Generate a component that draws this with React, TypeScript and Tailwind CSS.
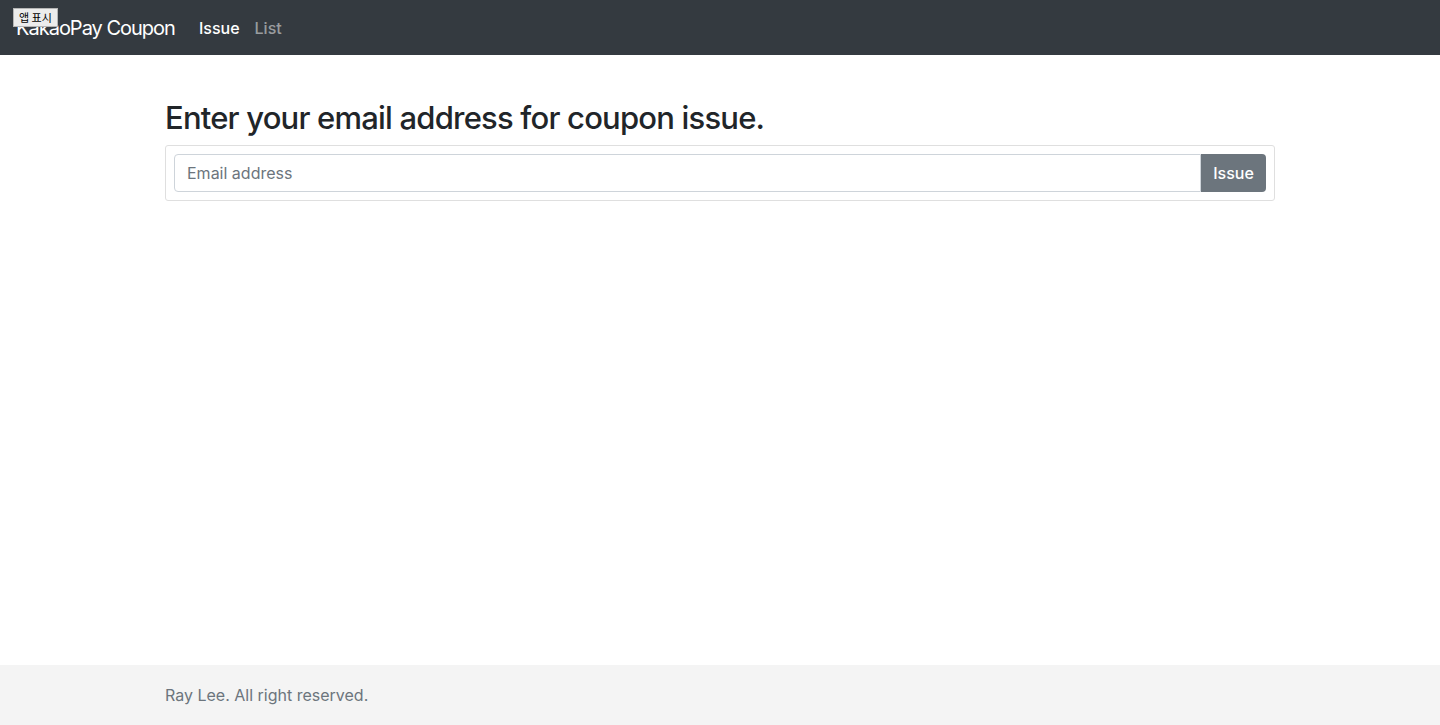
import React from "react"

export default function App() {
  return (
    <div className="flex flex-col h-[725px] bg-white font-['Inter',sans-serif] text-[#212529]">
      <nav className="relative flex h-[55px] items-center bg-[#343a40] px-4 shrink-0">
        <span className="text-[20px] tracking-[-1px] text-white mr-[24px]">KakaoPay Coupon</span>
        <a className="text-[16px] font-medium text-white mr-[15px]">Issue</a>
        <a className="text-[16px] font-medium text-white/50">List</a>
        <div className="absolute left-[13px] top-[8px] h-[19px] px-[5px] bg-[#ececec] border border-[#b5b5b5] text-[11px] leading-[17px] text-black font-['Noto_Sans_CJK_KR',sans-serif]">
          앱 표시
        </div>
      </nav>

      <main className="flex-grow">
        <div className="mx-auto w-[1110px] pt-[45px]">
          <h2 className="text-[31px] font-medium tracking-[-0.8px] leading-[36px] mb-[9px]">Enter your email address for coupon issue.</h2>
          <div className="border border-[#dfdfdf] rounded-[3px] p-[8px]">
            <div className="flex h-[38px]">
              <input
                placeholder="Email address"
                className="flex-grow border border-[#ced4da] rounded-l-[4px] px-[12px] text-[16px] text-[#495057] placeholder:text-[#6c757d] outline-none"
              />
              <button className="w-[65px] bg-[#6c757d] text-white text-[16px] font-medium rounded-r-[4px]">Issue</button>
            </div>
          </div>
        </div>
      </main>

      <footer className="h-[60px] bg-[#f4f4f4] shrink-0 flex items-center">
        <div className="mx-auto w-[1110px] text-[16px] text-[#6c757d]">Ray Lee. All right reserved.</div>
      </footer>
    </div>
  )
}
